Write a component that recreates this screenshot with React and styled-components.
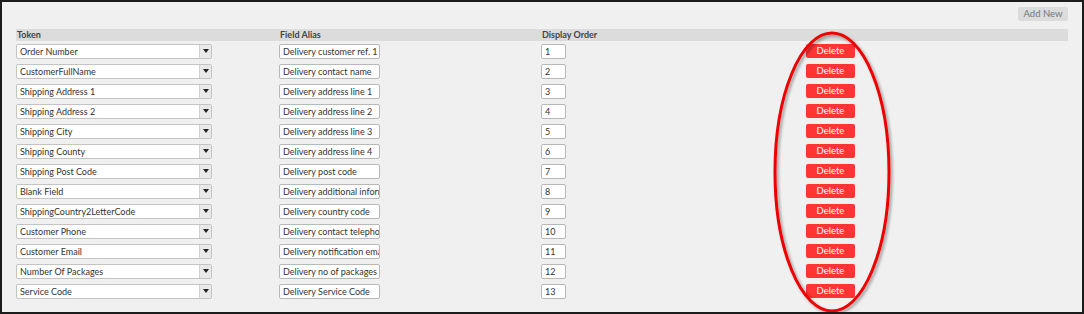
import styled, { createGlobalStyle } from "styled-components";

const GlobalStyle = createGlobalStyle`
  body {
    margin: 0;
    background: #ffffff;
    font-family: Lato, "Noto Sans", sans-serif;
  }
`;

const rows = [
  ["Order Number", "Delivery customer ref. 1", "1"],
  ["CustomerFullName", "Delivery contact name", "2"],
  ["Shipping Address 1", "Delivery address line 1", "3"],
  ["Shipping Address 2", "Delivery address line 2", "4"],
  ["Shipping City", "Delivery address line 3", "5"],
  ["Shipping County", "Delivery address line 4", "6"],
  ["Shipping Post Code", "Delivery post code", "7"],
  ["Blank Field", "Delivery additional information", "8"],
  ["ShippingCountry2LetterCode", "Delivery country code", "9"],
  ["Customer Phone", "Delivery contact telephone", "10"],
  ["Customer Email", "Delivery notification email", "11"],
  ["Number Of Packages", "Delivery no of packages", "12"],
  ["Service Code", "Delivery Service Code", "13"],
];

const App = () => {
  return (
    <Frame>
      <GlobalStyle />
      <Toolbar>
        <AddButton>Add New</AddButton>
      </Toolbar>
      <HeaderRow>
        <HeadCell>Token</HeadCell>
        <HeadCell>Field Alias</HeadCell>
        <HeadCell>Display Order</HeadCell>
        <HeadCell />
      </HeaderRow>
      {rows.map(([token, alias, order]) => (
        <Row key={order}>
          <Select>
            <span>{token}</span>
            <DropButton>
              <svg width="6" height="4" viewBox="0 0 6 4">
                <path d="M0 0h6L3 4z" fill="#222" />
              </svg>
            </DropButton>
          </Select>
          <TextBox $width={101}>{alias}</TextBox>
          <TextBox $width={25}>{order}</TextBox>
          <DeleteButton>Delete</DeleteButton>
        </Row>
      ))}
      <Marker width="130" height="282" viewBox="0 0 130 282">
        <defs>
          <filter id="shade" x="-20%" y="-10%" width="140%" height="120%">
            <feDropShadow dx="2" dy="2" stdDeviation="1.5" floodColor="#000" floodOpacity="0.35" />
          </filter>
        </defs>
        <ellipse cx="60" cy="141" rx="57" ry="139" fill="none" stroke="#ee0000" strokeWidth="3" filter="url(#shade)" />
      </Marker>
    </Frame>
  );
};

export default App;

const Frame = styled.div`
  position: relative;
  box-sizing: border-box;
  width: 1084px;
  height: 314px;
  overflow: hidden;
  border: 2px solid #1c1c1c;
  background: #f0f0f0;
  padding: 5px 14px 0 14px;
  font-size: 9px;
  color: #333;
`;

const Toolbar = styled.div`
  display: flex;
  justify-content: flex-end;
  height: 14px;
`;

const AddButton = styled.div`
  width: 50px;
  height: 14px;
  line-height: 14px;
  text-align: center;
  background: #dcdcdc;
  border-radius: 2px;
  color: #777;
  font-size: 9.5px;
`;

const columns = "263px 262px 265px 1fr";

const HeaderRow = styled.div`
  display: grid;
  grid-template-columns: ${columns};
  margin-top: 8px;
  height: 12px;
  background: #dcdcdc;
`;

const HeadCell = styled.div`
  font-weight: 700;
  line-height: 12px;
  padding-left: 1px;
  color: #444;
`;

const Row = styled.div`
  display: grid;
  grid-template-columns: ${columns};
  align-items: center;
  height: 20px;
  &:first-of-type {
    margin-top: 2px;
  }
`;

const Select = styled.div`
  box-sizing: border-box;
  display: flex;
  align-items: center;
  justify-content: space-between;
  width: 196px;
  height: 15px;
  padding-left: 3px;
  background: #fff;
  border: 1px solid #c4c4c4;
  border-radius: 2px;
  span {
    white-space: nowrap;
  }
`;

const DropButton = styled.div`
  display: flex;
  align-items: center;
  justify-content: center;
  width: 11px;
  height: 13px;
  background: #e9e9e9;
  border-left: 1px solid #d0d0d0;
`;

const TextBox = styled.div`
  box-sizing: border-box;
  width: ${(props) => props.$width}px;
  height: 15px;
  line-height: 13px;
  padding-left: 3px;
  background: #fff;
  border: 1px solid #b8b8b8;
  border-radius: 2px;
  overflow: hidden;
  white-space: nowrap;
`;

const DeleteButton = styled.div`
  width: 49px;
  height: 14px;
  line-height: 14px;
  text-align: center;
  background: #ff3535;
  color: #fff;
  font-size: 9.5px;
  border-radius: 2px;
`;

const Marker = styled.svg`
  position: absolute;
  left: 770px;
  top: 29px;
  overflow: visible;
`;
